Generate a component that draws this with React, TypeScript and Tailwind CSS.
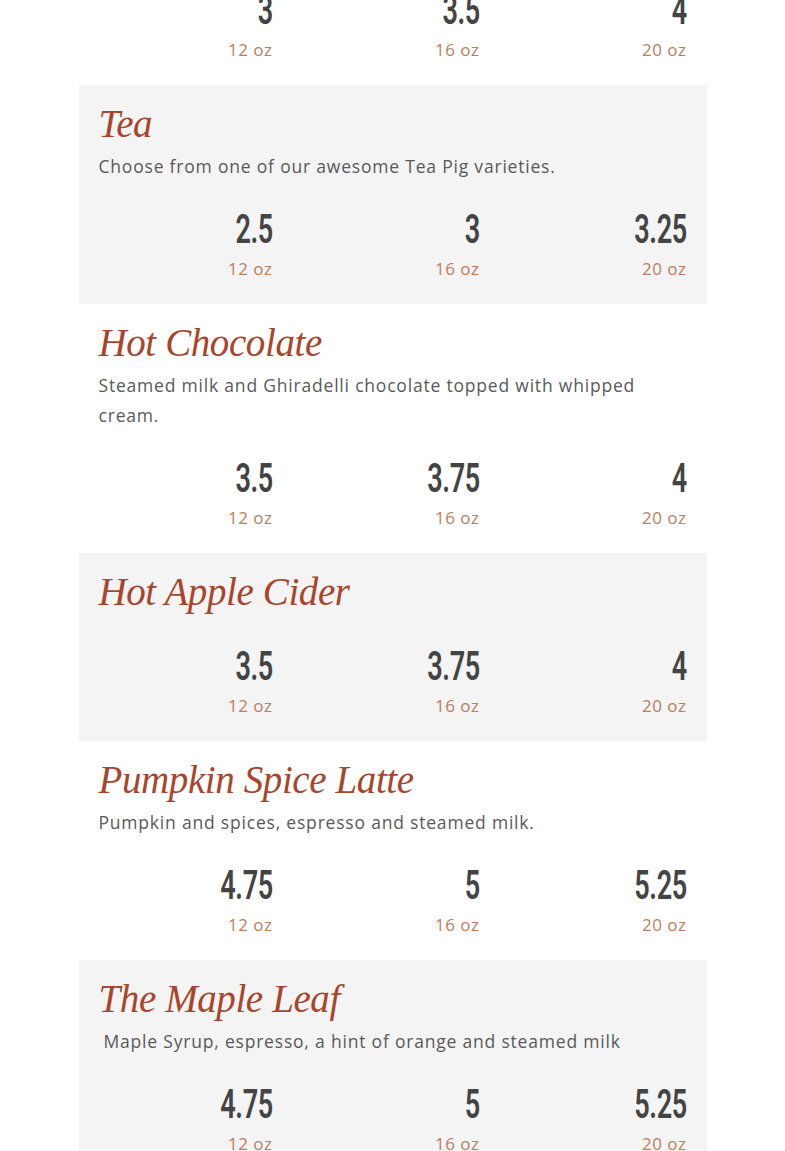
import React from 'react';

interface Item {
  name?: string;
  desc?: string;
  prices: string[];
  indentDesc?: boolean;
}

const sizes = ['12 oz', '16 oz', '20 oz'];

const items: Item[] = [
  { prices: ['3', '3.5', '4'] },
  { name: 'Tea', desc: 'Choose from one of our awesome Tea Pig varieties.', prices: ['2.5', '3', '3.25'] },
  {
    name: 'Hot Chocolate',
    desc: 'Steamed milk and Ghiradelli chocolate topped with whipped cream.',
    prices: ['3.5', '3.75', '4'],
  },
  { name: 'Hot Apple Cider', prices: ['3.5', '3.75', '4'] },
  { name: 'Pumpkin Spice Latte', desc: 'Pumpkin and spices, espresso and steamed milk.', prices: ['4.75', '5', '5.25'] },
  {
    name: 'The Maple Leaf',
    desc: 'Maple Syrup, espresso, a hint of orange and steamed milk',
    prices: ['4.75', '5', '5.25'],
    indentDesc: true,
  },
];

function Prices({ prices }: { prices: string[] }) {
  return (
    <div className="grid grid-cols-3 gap-x-[33px]">
      {prices.map((p, i) => (
        <div key={i} className="flex flex-col items-end">
          <div className="h-[40px] leading-[40px]">
            <span className="inline-block origin-right scale-x-[0.66] font-['Roboto',sans-serif] font-semibold text-[41px] text-[#444444] tracking-[-0.5px]">
              {p}
            </span>
          </div>
          <div className="mt-[8px] h-[24px] leading-[24px] font-['Open_Sans',sans-serif] text-[17px] tracking-[0.5px] text-[#bb7d5c]">
            {sizes[i]}
          </div>
        </div>
      ))}
    </div>
  );
}

function MenuCard({ item, gray, first }: { item: Item; gray: boolean; first?: boolean }) {
  return (
    <div
      className={`px-[20px] pb-[23px] ${first ? '-mt-[10px] pt-0' : 'pt-[15px]'} ${gray ? 'bg-[#f4f4f4]' : 'bg-white'}`}
    >
      {item.name && (
        <h2 className="h-[48px] leading-[48px] font-['Liberation_Serif',serif] italic text-[39px] text-[#a8452a] tracking-[-0.4px]">
          {item.name}
        </h2>
      )}
      {item.desc && (
        <p
          className={`mt-[3px] leading-[30px] font-['Open_Sans',sans-serif] text-[17.5px] tracking-[0.8px] text-[#595959] ${item.indentDesc ? 'pl-[5px]' : ''}`}
        >
          {item.desc}
        </p>
      )}
      {item.name && <div className={item.desc ? 'h-[28px]' : 'h-[30px]'} />}
      <Prices prices={item.prices} />
    </div>
  );
}

export default function App() {
  return (
    <div className="min-h-[1151px] bg-white overflow-hidden">
      <div className="mx-auto w-[628px]">
        {items.map((item, i) => (
          <MenuCard key={i} item={item} gray={i % 2 === 1} first={i === 0} />
        ))}
      </div>
    </div>
  );
}
